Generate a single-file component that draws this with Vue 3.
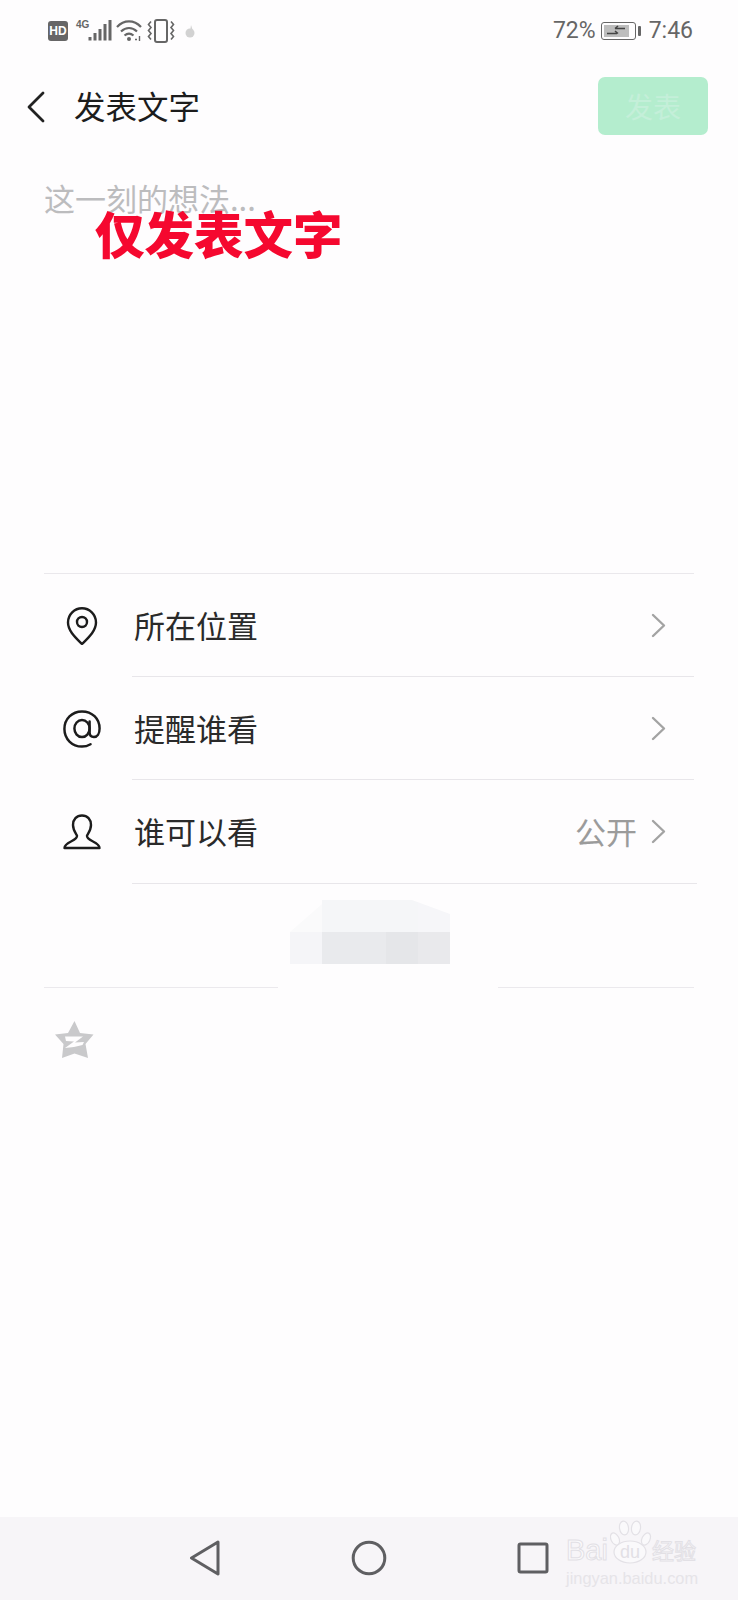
<script setup>
const rows = [
  { label: '所在位置', icon: 'pin', value: '' },
  { label: '提醒谁看', icon: 'at', value: '' },
  { label: '谁可以看', icon: 'user', value: '公开' },
]
const mosaic = ['#fafafb', '#f5f6f8', '#f5f6f8', '#f6f6f9', '#f5f5f8', '#e9eaed', '#e5e6e9', '#e9e9ec']
</script>

<template>
  <div class="page">
    <div class="status">
      <div class="status-left">
        <span class="hd">HD</span>
        <span class="net">4G</span>
        <svg class="signal" width="24" height="24" viewBox="0 0 24 24">
          <rect x="0.500" y="18" width="3" height="3.500" fill="#666" />
          <rect x="5.500" y="14" width="3" height="7.500" fill="#666" />
          <rect x="10.500" y="10" width="3" height="11.500" fill="#666" />
          <rect x="15.500" y="5" width="3" height="16.500" fill="#666" />
          <rect x="20.500" y="1" width="3" height="20.500" fill="#666" />
        </svg>
        <svg class="wifi" width="26" height="22" viewBox="0 0 26 22" fill="none" stroke="#666" stroke-width="2.200">
          <path d="M1 7C8-0.500 18-0.500 25 7" />
          <path d="M5 11.500C10 7 16 7 21 11.500" />
          <path d="M8.500 15.500C11.500 13 14.500 13 17.500 15.500" />
          <circle cx="13" cy="19" r="2" fill="#666" stroke="none" />
          <path d="M19 19.500h2M23.500 16v5" stroke-width="1.400" />
        </svg>
        <svg class="vibrate" width="28" height="24" viewBox="0 0 28 24" fill="none" stroke="#666" stroke-width="2">
          <rect x="8" y="1" width="12" height="22" rx="2" />
          <path d="M4 2.500l-2.500 3 2.500 3-2.500 3 2.500 3-2.500 3 2.500 3M24 2.500l2.500 3-2.500 3 2.500 3-2.500 3 2.500 3-2.500 3" stroke-width="1.600" />
        </svg>
        <svg class="qq" width="11" height="14" viewBox="0 0 11 14">
          <circle cx="5" cy="9" r="4.500" fill="#d2d2d2" />
          <path d="M6 1l2 6-3 1z" fill="#d2d2d2" />
        </svg>
      </div>
      <div class="status-right">
        <span>72%</span>
        <span class="battery">
          <span class="battery-body">
            <span class="battery-fill">
              <svg width="24" height="12" viewBox="0 0 24 12" fill="none" stroke="#444" stroke-width="1.600">
                <path d="M3 8.500h10M11 6l3 2.500M21 3.500H11M14 1l-3 2.500" />
              </svg>
            </span>
          </span>
          <span class="battery-tip"></span>
        </span>
        <span class="clock">7:46</span>
      </div>
    </div>

    <div class="header">
      <svg class="back" width="18" height="32" viewBox="0 0 18 32" fill="none" stroke="#222" stroke-width="2.800" stroke-linecap="round" stroke-linejoin="round">
        <path d="M16 2L2 16l14 14" />
      </svg>
      <span class="title">发表文字</span>
      <button class="publish">发表</button>
    </div>

    <div class="compose">
      <span class="placeholder">这一刻的想法...</span>
      <span class="stamp">仅发表文字</span>
    </div>

    <div class="options">
      <div v-for="row in rows" :key="row.label" class="row">
        <div class="row-icon">
          <svg v-if="row.icon === 'pin'" width="32" height="38" viewBox="0 0 32 38" fill="none" stroke="#1c1c1c" stroke-width="2.400" stroke-linejoin="round">
            <path d="M16 37C10 31 2 24 2 15.500 2 7.500 8.500 1.300 16 1.300S30 7.500 30 15.500C30 24 22 31 16 37Z" />
            <circle cx="16" cy="15" r="5" />
          </svg>
          <svg v-else-if="row.icon === 'at'" width="38" height="38" viewBox="0 0 40 40" fill="none" stroke="#1c1c1c" stroke-width="2.600" stroke-linecap="round">
            <path d="M29 36C25.500 38 22.500 38.500 20 38.500 9.500 38.500 1.500 30.500 1.500 20S9.500 1.500 20 1.500 38.500 9 38.500 19.500C38.500 25 36 28.500 32.500 28.500 29.500 28.500 28 26.500 28 23.500V12" />
            <ellipse cx="20" cy="19.500" rx="8" ry="9" />
          </svg>
          <svg v-else width="38" height="36" viewBox="0 0 38 36" fill="none" stroke="#1c1c1c" stroke-width="2.400" stroke-linejoin="round">
            <path d="M19 1.500C13.500 1.500 10 5.500 10 11 10 16 12.500 19 14 21.500 14.500 24 12 25.500 8 27.500 4 29.500 1.500 31 1.500 34H36.500C36.500 31 34 29.500 30 27.500 26 25.500 23.500 24 24 21.500 25.500 19 28 16 28 11 28 5.500 24.500 1.500 19 1.500Z" />
          </svg>
        </div>
        <div class="row-body">
          <span class="row-label">{{ row.label }}</span>
          <span v-if="row.value" class="row-value">{{ row.value }}</span>
          <svg class="chevron" width="15" height="25" viewBox="0 0 15 25" fill="none" stroke="#a3a3a3" stroke-width="2.400" stroke-linecap="round" stroke-linejoin="round">
            <path d="M2 2l11 10.500L2 23" />
          </svg>
        </div>
      </div>
    </div>

    <div class="blur-band">
      <div class="mosaic">
        <i v-for="(c, i) in mosaic" :key="i" :style="{ background: c }"></i>
      </div>
    </div>

    <div class="share">
      <span class="share-mask"></span>
      <svg width="40" height="38" viewBox="0 0 40 38">
        <path d="M19.500 0L25 12 38.500 13.500 30.500 23 33 37 19.500 32.500 7 37 8.500 23 0 13.500 13 12Z" fill="#c9c9cb" />
        <path d="M10 15.500H28L20 21.500 29 21 27.500 24C22 25.500 16 26.500 10 27L19 20.500 11 20Z" fill="#fefdfe" />
      </svg>
    </div>

    <div class="spacer"></div>

    <div class="navbar">
      <svg class="nav-back" width="32" height="36" viewBox="0 0 32 36" fill="none" stroke="#5f5f62" stroke-width="3" stroke-linejoin="round">
        <path d="M29 2L2.500 18 29 34Z" />
      </svg>
      <svg class="nav-home" width="36" height="36" viewBox="0 0 36 36" fill="none" stroke="#5f5f62" stroke-width="3">
        <circle cx="18" cy="18" r="15.800" />
      </svg>
      <svg class="nav-recent" width="32" height="32" viewBox="0 0 32 32" fill="none" stroke="#5f5f62" stroke-width="3" stroke-linejoin="round">
        <rect x="2" y="2" width="28" height="28" rx="1.500" />
      </svg>
      <div class="watermark">
        <svg class="paw" width="42" height="44" viewBox="0 0 42 44" fill="#faf9fb" stroke="#e3e1e6" stroke-width="1.200">
          <ellipse cx="14" cy="8" rx="4.500" ry="7" transform="rotate(-8 14 8)" />
          <ellipse cx="26" cy="8" rx="4.500" ry="7" transform="rotate(8 26 8)" />
          <ellipse cx="5" cy="19" rx="4" ry="6.500" transform="rotate(-25 5 19)" />
          <ellipse cx="36" cy="19" rx="4" ry="6.500" transform="rotate(25 36 19)" />
          <ellipse cx="20" cy="32" rx="16" ry="11" />
        </svg>
        <span class="wm-bai">Bai</span>
        <span class="wm-du">du</span>
        <span class="wm-cn">经验</span>
        <span class="wm-url">jingyan.baidu.com</span>
      </div>
    </div>
  </div>
</template>

<style scoped>
.page {
  position: relative;
  width: 738px;
  height: 1600px;
  display: flex;
  flex-direction: column;
  background: #fefdfe;
  font-family: "Noto Sans CJK SC", "Noto Sans", sans-serif;
  overflow: hidden;
}
.status {
  height: 60px;
  flex: none;
  display: flex;
  align-items: center;
  justify-content: space-between;
  box-sizing: border-box;
  padding: 2px 45px 0 48px;
  color: #666;
}
.status-left {
  display: flex;
  align-items: center;
}
.hd {
  width: 20px;
  height: 20px;
  border-radius: 3px;
  background: #666;
  color: #fff;
  font: 700 12px/20px "Liberation Sans", sans-serif;
  text-align: center;
}
.net {
  font: 700 10px/10px "Liberation Sans", sans-serif;
  margin: -12px 0 0 8px;
  width: 12px;
}
.wifi { margin-left: 4px; }
.vibrate { margin-left: 5px; }
.qq { margin-left: 10px; }
.status-right {
  display: flex;
  align-items: center;
  font: 400 23px/30px "Roboto", sans-serif;
}
.battery {
  display: flex;
  align-items: center;
  margin-left: 5px;
}
.battery-body {
  width: 35px;
  height: 18px;
  border: 1px solid #666;
  border-radius: 3px;
  padding: 2px;
  box-sizing: border-box;
  display: flex;
}
.battery-fill {
  width: 25px;
  background: #bdbdbd;
  display: flex;
  align-items: center;
  justify-content: center;
}
.battery-tip {
  width: 3px;
  height: 10px;
  margin-left: 2px;
  background: #666;
  border-radius: 1px;
}
.clock { margin-left: 8px; }
.header {
  height: 92px;
  flex: none;
  display: flex;
  align-items: center;
  padding: 0 30px 0 27px;
}
.back {
  flex: none;
  margin-top: 2px;
}
.title {
  margin: 0 0 3px 29px;
  font-size: 31.500px;
  line-height: 44px;
  color: #1c1c1c;
}
.publish {
  margin-left: auto;
  width: 110px;
  height: 58px;
  padding: 0;
  border: 0;
  border-radius: 7px;
  background: #b4edce;
  color: #c4efd9;
  font-family: inherit;
  font-size: 28px;
}
.compose {
  position: relative;
  height: 422px;
  flex: none;
  box-sizing: border-box;
  padding-top: 23px;
  border-bottom: 1px solid #eae8ec;
  margin: 0 44px;
}
.placeholder {
  display: block;
  font-size: 31px;
  line-height: 46px;
  color: #bcbcbe;
}
.stamp {
  position: absolute;
  left: 51px;
  top: 51px;
  font-size: 49.500px;
  line-height: 60px;
  font-weight: 900;
  color: #f5082f;
  white-space: nowrap;
}
.options {
  flex: none;
  margin: 0 44px;
}
.row {
  display: flex;
  height: 103.200px;
}
.row-icon {
  width: 88px;
  flex: none;
  display: flex;
  align-items: center;
  justify-content: center;
  padding-right: 12px;
  box-sizing: border-box;
}
.row-body {
  flex: 1;
  display: flex;
  align-items: center;
  border-bottom: 1px solid #e8e6ea;
  padding-right: 28px;
}
.row:last-child .row-body {
  margin-right: -3px;
  padding-right: 31px;
}
.row-label {
  margin-left: 2px;
  font-size: 31px;
  line-height: 44px;
  color: #2a2a2a;
}
.row-value {
  margin-left: auto;
  font-size: 31px;
  line-height: 44px;
  color: #9b9b9b;
}
.chevron {
  margin-left: auto;
  flex: none;
}
.row-value + .chevron { margin-left: 14px; }
.blur-band {
  height: 103.400px;
  flex: none;
  box-sizing: border-box;
  padding: 16.400px 0 0 290px;
}
.mosaic {
  display: grid;
  grid-template-columns: 32px 64px 32px 32px;
  grid-template-rows: 32px 32px;
  width: 160px;
  clip-path: polygon(0 32px, 32px 4px, 32px 0, 122px 0, 160px 14px, 160px 64px, 0 64px);
}
.share {
  position: relative;
  flex: none;
  height: 90px;
  margin: 0 44px;
  border-top: 1px solid #ebe9ed;
  box-sizing: border-box;
  padding: 33px 0 0 11px;
}
.share-mask {
  position: absolute;
  left: 234px;
  top: -2px;
  width: 220px;
  height: 4px;
  background: #fefdfe;
}
.spacer { flex: 1; }
.navbar {
  position: relative;
  height: 83px;
  flex: none;
  box-sizing: border-box;
  background: #f7f5f8;
  display: grid;
  grid-template-columns: 32px 36px 32px;
  column-gap: 130px;
  align-items: center;
  padding: 0 0 2px 189px;
}
.watermark {
  position: absolute;
  left: 566px;
  top: 3px;
  width: 134px;
  height: 70px;
  font-family: "Liberation Sans", sans-serif;
  white-space: nowrap;
}
.paw {
  position: absolute;
  left: 44px;
  top: 0;
}
.wm-bai,
.wm-cn {
  position: absolute;
  color: #fbfafc;
  -webkit-text-stroke: 1px #e2e0e5;
}
.wm-bai {
  left: 0;
  top: 15px;
  font-size: 29px;
  line-height: 30px;
}
.wm-du {
  position: absolute;
  left: 54px;
  top: 21px;
  font-size: 18px;
  line-height: 22px;
  color: #e2e0e5;
}
.wm-cn {
  left: 86px;
  top: 14px;
  font: 400 22px/30px "Noto Sans CJK SC", sans-serif;
}
.wm-url {
  position: absolute;
  top: 49px;
  left: 0;
  font-size: 16.400px;
  line-height: 18px;
  color: #e6e4e8;
}
</style>
